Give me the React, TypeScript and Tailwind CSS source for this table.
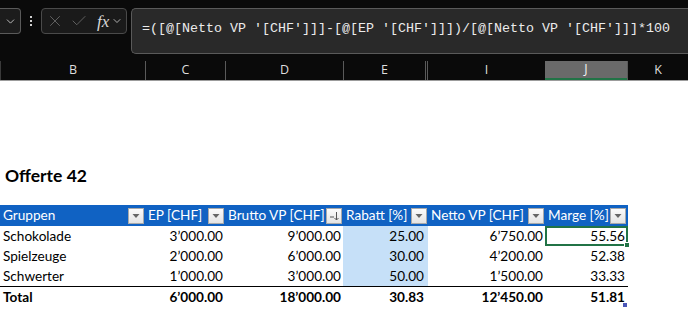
import { X, Check, ChevronDown } from 'lucide-react'

const cols = [
  { label: 'B', w: 'w-[145px]' },
  { label: 'C', w: 'w-[80px]' },
  { label: 'D', w: 'w-[118px]' },
  { label: 'E', w: 'w-[82px]' },
]

const rows = [
  { name: 'Schokolade', ep: '3’000.00', brutto: '9’000.00', rabatt: '25.00', netto: '6’750.00', marge: '55.56' },
  { name: 'Spielzeuge', ep: '2’000.00', brutto: '6’000.00', rabatt: '30.00', netto: '4’200.00', marge: '52.38' },
  { name: 'Schwerter', ep: '1’000.00', brutto: '3’000.00', rabatt: '50.00', netto: '1’500.00', marge: '33.33' },
]

const FilterBtn = ({ sort }: { sort?: boolean }) => (
  <div className="w-[16px] h-[16px] shrink-0 border border-[#a9a9a9] bg-gradient-to-b from-[#fbfbfb] to-[#e4e4e4] flex items-center justify-center">
    {sort ? (
      <svg width="12" height="12" viewBox="0 0 12 12">
        <path d="M2 7h4" stroke="#555" strokeWidth="1" />
        <path d="M8.5 2v8M6.5 8l2 2 2-2" stroke="#555" strokeWidth="1" fill="none" />
      </svg>
    ) : (
      <svg width="10" height="6" viewBox="0 0 10 6">
        <path d="M1.5 1h7L5 5z" fill="#666" />
      </svg>
    )}
  </div>
)

const HeadCell = ({ w, label, sort }: { w: string; label: string; sort?: boolean }) => (
  <div className={`${w} h-full flex items-center justify-between pl-[3px] pr-[1px]`}>
    <span className="whitespace-nowrap">{label}</span>
    <FilterBtn sort={sort} />
  </div>
)

export default function App() {
  return (
    <div className="w-[688px] h-[311px] overflow-hidden bg-white" style={{ fontFamily: 'Lato, "Liberation Sans", sans-serif' }}>
      {/* ribbon / formula area */}
      <div className="h-[61px] bg-[#0a0a0a] flex items-start pt-[8px]">
        <div className="w-[21px] h-[26px] border border-[#5a5a5a] border-l-0 rounded-r-[4px] bg-[#1c1c1c] flex items-center justify-end pr-[3px]">
          <ChevronDown size={13} color="#cfcfcf" strokeWidth={1.6} />
        </div>
        <div className="w-[20px] h-[26px] flex flex-col items-center justify-center gap-[2px]">
          <span className="w-[2px] h-[2px] bg-[#cfcfcf]" />
          <span className="w-[2px] h-[2px] bg-[#cfcfcf]" />
          <span className="w-[2px] h-[2px] bg-[#cfcfcf]" />
        </div>
        <div className="w-[86px] h-[26px] border border-[#4a4a4a] rounded-[4px] bg-[#1a1a1a] flex items-center pl-[4px] gap-[6px]">
          <X size={18} color="#6e6e6e" strokeWidth={1.1} />
          <Check size={18} color="#6e6e6e" strokeWidth={1.1} />
          <span className="text-[#d8d8d8] italic text-[17px] ml-[3px] leading-none" style={{ fontFamily: '"Liberation Serif", serif' }}>fx</span>
          <ChevronDown size={12} color="#cfcfcf" strokeWidth={1.6} className="-ml-[4px]" />
        </div>
        <div className="ml-[4px] flex-1 h-[46px] border border-[#5a5a5a] border-r-0 rounded-l-[5px] bg-[#292929] pl-[10px] pt-[5px]">
          <span className="text-[#ececec] text-[13.33px] whitespace-nowrap" style={{ fontFamily: '"Liberation Mono", monospace' }}>
            =([@[Netto VP '[CHF']]]-[@[EP '[CHF']]])/[@[Netto VP '[CHF']]]*100
          </span>
        </div>
      </div>

      {/* column headers */}
      <div className="h-[20px] bg-[#0a0a0a] border-b border-[#9c9c9c] flex text-[12.5px] text-[#dedede]" style={{ fontFamily: '"Open Sans", sans-serif' }}>
        {cols.map((c, i) => (
          <div key={c.label} className={`${c.w} h-full flex items-center justify-center border-l ${i === 0 ? 'border-[#3a3a3a]' : 'border-[#5a5a5a]'}`}>
            {c.label}
          </div>
        ))}
        <div className="w-[3px] h-full border-l border-r border-[#5a5a5a]" />
        <div className="w-[117px] h-full flex items-center justify-center">I</div>
        <div className="w-[82px] h-full flex items-center justify-center bg-[#6a6a6a] border-b-2 border-[#217346] text-[#f2f2f2]">J</div>
        <div className="w-[61px] h-full flex items-center justify-center border-l border-[#5a5a5a]">K</div>
      </div>

      {/* sheet */}
      <div className="text-[13.6px] text-black">
        <div className="h-[124px] flex items-end pl-[5px] pb-[21px]">
          <span className="text-[17.5px] font-bold leading-none">Offerte 42</span>
        </div>

        <div className="w-[628px]">
          <div className="h-[21px] bg-[#1062c3] text-white flex">
            <HeadCell w="w-[145px]" label="Gruppen" />
            <HeadCell w="w-[80px]" label="EP [CHF]" />
            <HeadCell w="w-[118px]" label="Brutto VP [CHF]" sort />
            <HeadCell w="w-[85px]" label="Rabatt [%]" />
            <HeadCell w="w-[117px]" label="Netto VP [CHF]" />
            <HeadCell w="w-[82px]" label="Marge [%]" />
          </div>

          {rows.map((r, i) => (
            <div key={r.name} className="h-[20px] flex items-center">
              <div className="w-[145px] pl-[3px]">{r.name}</div>
              <div className="w-[80px] text-right pr-[2px]">{r.ep}</div>
              <div className="w-[118px] text-right pr-[2px]">{r.brutto}</div>
              <div className="w-[85px] h-full flex items-center justify-end pr-[4px] bg-[#c6e0f8]">{r.rabatt}</div>
              <div className="w-[117px] text-right pr-[2px]">{r.netto}</div>
              {i === 0 ? (
                <div className="w-[83px] h-full relative border-2 border-[#217346] flex items-center justify-end pr-[1px]">
                  {r.marge}
                  <span className="absolute -right-[4px] -bottom-[4px] w-[6px] h-[6px] bg-[#217346] border border-white" />
                </div>
              ) : (
                <div className="w-[82px] text-right pr-[2px]">{r.marge}</div>
              )}
            </div>
          ))}

          <div className="h-[21px] flex items-center font-bold border-t border-black relative">
            <div className="w-[145px] pl-[3px]">Total</div>
            <div className="w-[80px] text-right pr-[2px]">6’000.00</div>
            <div className="w-[118px] text-right pr-[2px]">18’000.00</div>
            <div className="w-[85px] text-right pr-[4px]">30.83</div>
            <div className="w-[117px] text-right pr-[2px]">12’450.00</div>
            <div className="w-[82px] text-right pr-[2px]">51.81</div>
            <span className="absolute right-[1px] bottom-[0px] w-[4px] h-[4px] bg-[#4a56b8]" />
          </div>
        </div>
      </div>
    </div>
  )
}
